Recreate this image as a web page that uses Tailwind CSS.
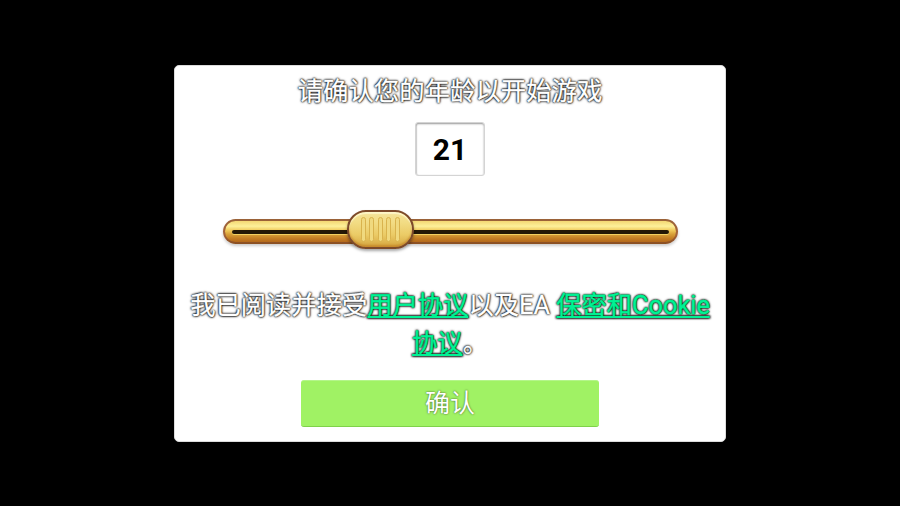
<!DOCTYPE html>
<html>
<head>
<meta charset="utf-8">
<script src="https://cdn.jsdelivr.net/npm/@tailwindcss/browser@4"></script>
</head>
<body class="bg-black">
<div class="w-[900px] h-[506px] bg-black flex items-start justify-center pt-[65px] font-['Roboto','Noto_Sans_CJK_SC',sans-serif]">
  <div class="w-[552px] h-[377px] bg-white rounded-[5px] flex flex-col items-center border border-[#dcdcdc]">
    <div class="mt-[7px] h-[36px] leading-[36px] text-[25.4px] text-white whitespace-nowrap [-webkit-text-stroke:0.35px_#fff] [text-shadow:0_0_1px_#000,0_0_2px_#000,0_0_2px_#000,0_0_3px_#333]">请确认您的年龄以开始游戏</div>
    <div class="mt-[13px] w-[70px] h-[54px] flex items-center justify-center bg-white rounded-[3px] border border-[#d4d4d4] shadow-[inset_0_1px_2px_rgba(0,0,0,0.4),inset_1px_0_1px_rgba(0,0,0,0.1)] text-[30px] font-bold text-black">21</div>
    <div class="mt-[34px] w-[455px] h-[39px] relative flex items-end pb-[5px]">
      <div class="w-full h-[25px] rounded-full p-[2px] bg-[linear-gradient(#9a6238_0%,#a5633a_60%,#8a4f22_100%)] shadow-[0_2px_3px_rgba(0,0,0,0.2)]">
        <div class="w-full h-full rounded-full bg-[linear-gradient(#f4d873_0%,#fdf09a_25%,#f0c95a_45%,#d9a23a_62%,#c27a22_85%,#b4691c_100%)] flex items-center px-[7px]">
          <div class="w-full h-[4px] rounded-full bg-[#241806] shadow-[0_1px_0_#f3d060]"></div>
        </div>
      </div>
      <div class="absolute left-[124px] top-0 w-[67px] h-[39px] rounded-[19px] border-2 border-[#7d4a2a] bg-[linear-gradient(#f5e39a_0%,#f2dc84_30%,#ebcb66_65%,#d5a640_100%)] shadow-[0_2px_3px_rgba(0,0,0,0.35),inset_0_-2px_2px_rgba(190,120,30,0.6),inset_0_2px_1px_rgba(255,250,210,0.8)] flex items-center justify-center gap-[3.5px]">
        <div class="w-[5px] h-[25px] rounded-full bg-[#f0d97f] border border-[#d9b34d]"></div>
        <div class="w-[5px] h-[25px] rounded-full bg-[#f0d97f] border border-[#d9b34d]"></div>
        <div class="w-[5px] h-[25px] rounded-full bg-[#f0d97f] border border-[#d9b34d]"></div>
        <div class="w-[5px] h-[25px] rounded-full bg-[#f0d97f] border border-[#d9b34d]"></div>
        <div class="w-[5px] h-[25px] rounded-full bg-[#f0d97f] border border-[#d9b34d]"></div>
      </div>
    </div>
    <div class="mt-[38px] w-[530px] text-center text-[25.3px] leading-[38px] text-white [-webkit-text-stroke:0.35px_currentColor] [text-shadow:0_0_1px_#000,0_0_2px_#000,0_0_2px_#000,0_0_3px_#333]">我已阅读并接受<a class="text-[#00f294] underline">用户协议</a>以及EA <a class="text-[#00f294] underline">保密和Cookie协议</a>。</div>
    <div class="mt-[17px] w-[298px] h-[47px] rounded-[3px] bg-[#a0f264] border-t border-t-[#b4f58a] border-b border-b-[#7fd24a] flex items-center justify-center text-[25px] text-white [text-shadow:0_0_2px_rgba(0,0,0,0.7)]">确认</div>
  </div>
</div>
</body>
</html>
